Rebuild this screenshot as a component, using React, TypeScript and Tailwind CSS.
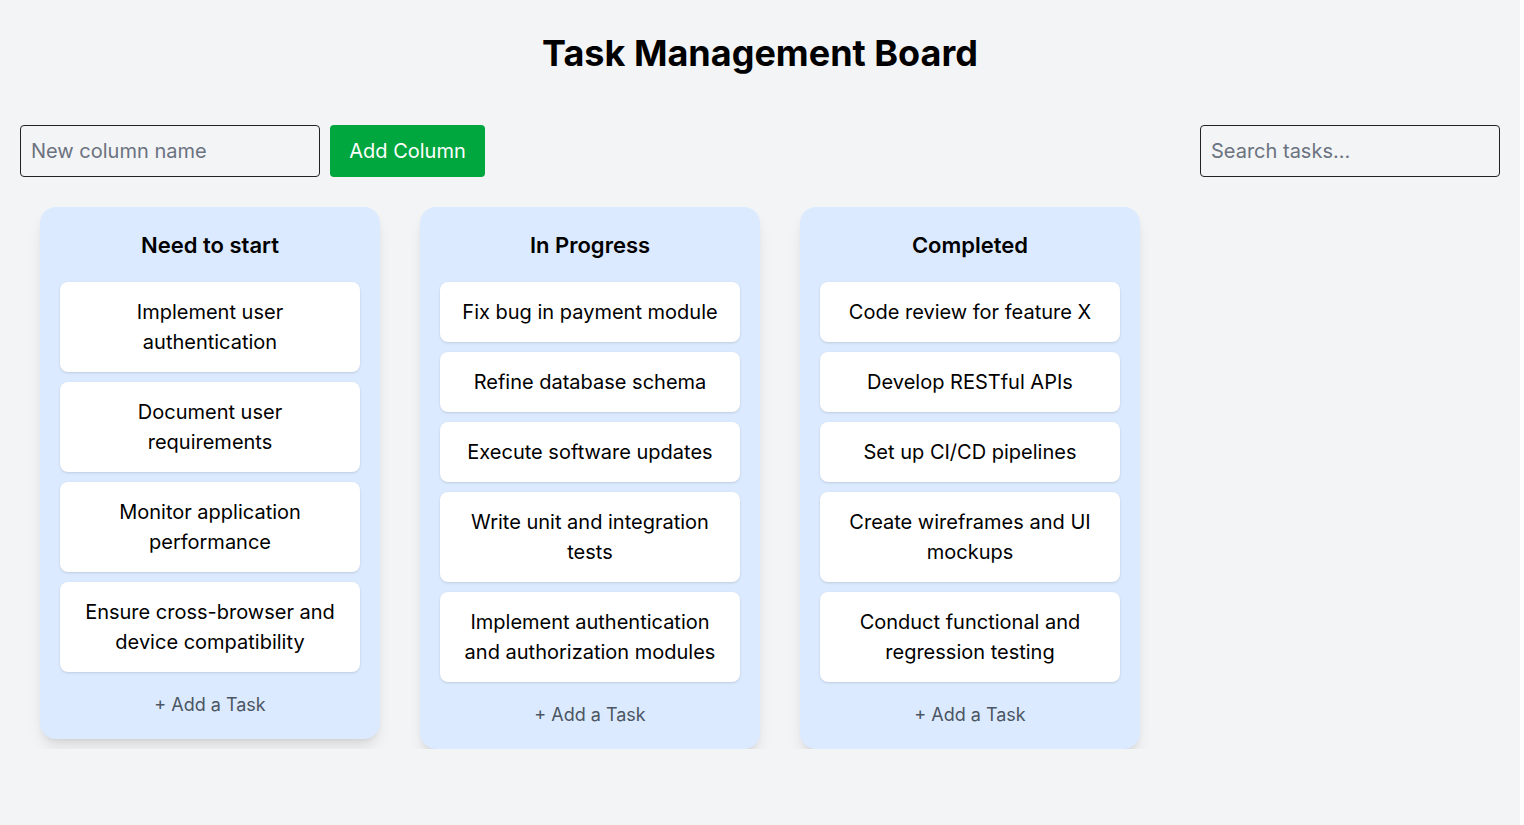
import React from "react";

const columns = [
  {
    title: "Need to start",
    tasks: [
      "Implement user authentication",
      "Document user requirements",
      "Monitor application performance",
      "Ensure cross-browser and device compatibility",
    ],
  },
  {
    title: "In Progress",
    tasks: [
      "Fix bug in payment module",
      "Refine database schema",
      "Execute software updates",
      "Write unit and integration tests",
      "Implement authentication and authorization modules",
    ],
  },
  {
    title: "Completed",
    tasks: [
      "Code review for feature X",
      "Develop RESTful APIs",
      "Set up CI/CD pipelines",
      "Create wireframes and UI mockups",
      "Conduct functional and regression testing",
    ],
  },
];

export default function App() {
  return (
    <div className="w-[1520px] min-h-screen bg-[#f3f4f6] px-5 pt-[33px] font-['Inter',sans-serif] text-black">
      <h1 className="text-center text-4xl leading-10 font-bold">Task Management Board</h1>
      <div className="mt-[52px] flex items-center justify-between">
        <div className="flex gap-[10px]">
          <input
            className="h-[52px] w-[300px] rounded border border-[#222] bg-transparent px-[10px] text-xl placeholder:text-[#6b7280] outline-none"
            placeholder="New column name"
          />
          <button className="h-[52px] w-[155px] rounded bg-[#00a63e] text-xl text-white">Add Column</button>
        </div>
        <input
          className="h-[52px] w-[300px] rounded border border-[#222] bg-transparent px-[10px] text-xl placeholder:text-[#6b7280] outline-none"
          placeholder="Search tasks..."
        />
      </div>
      <div className="mt-[10px] flex items-start gap-10 overflow-x-auto px-5 pt-5">
        {columns.map((col) => (
          <div key={col.title} className="w-[340px] shrink-0 rounded-2xl bg-[#dbeafe] px-5 pt-5 pb-5 shadow-lg">
            <h2 className="mb-[19px] text-center text-[22px] leading-[36px] font-semibold">{col.title}</h2>
            <div className="flex flex-col gap-[10px]">
              {col.tasks.map((t) => (
                <div key={t} className="rounded-lg bg-white px-5 py-[15px] text-center text-xl leading-[30px] shadow-sm">
                  {t}
                </div>
              ))}
            </div>
            <button className="mt-[18px] block w-full pt-[1px] text-center text-lg leading-7 text-[#4b5563]">+ Add a Task</button>
          </div>
        ))}
      </div>
    </div>
  );
}
